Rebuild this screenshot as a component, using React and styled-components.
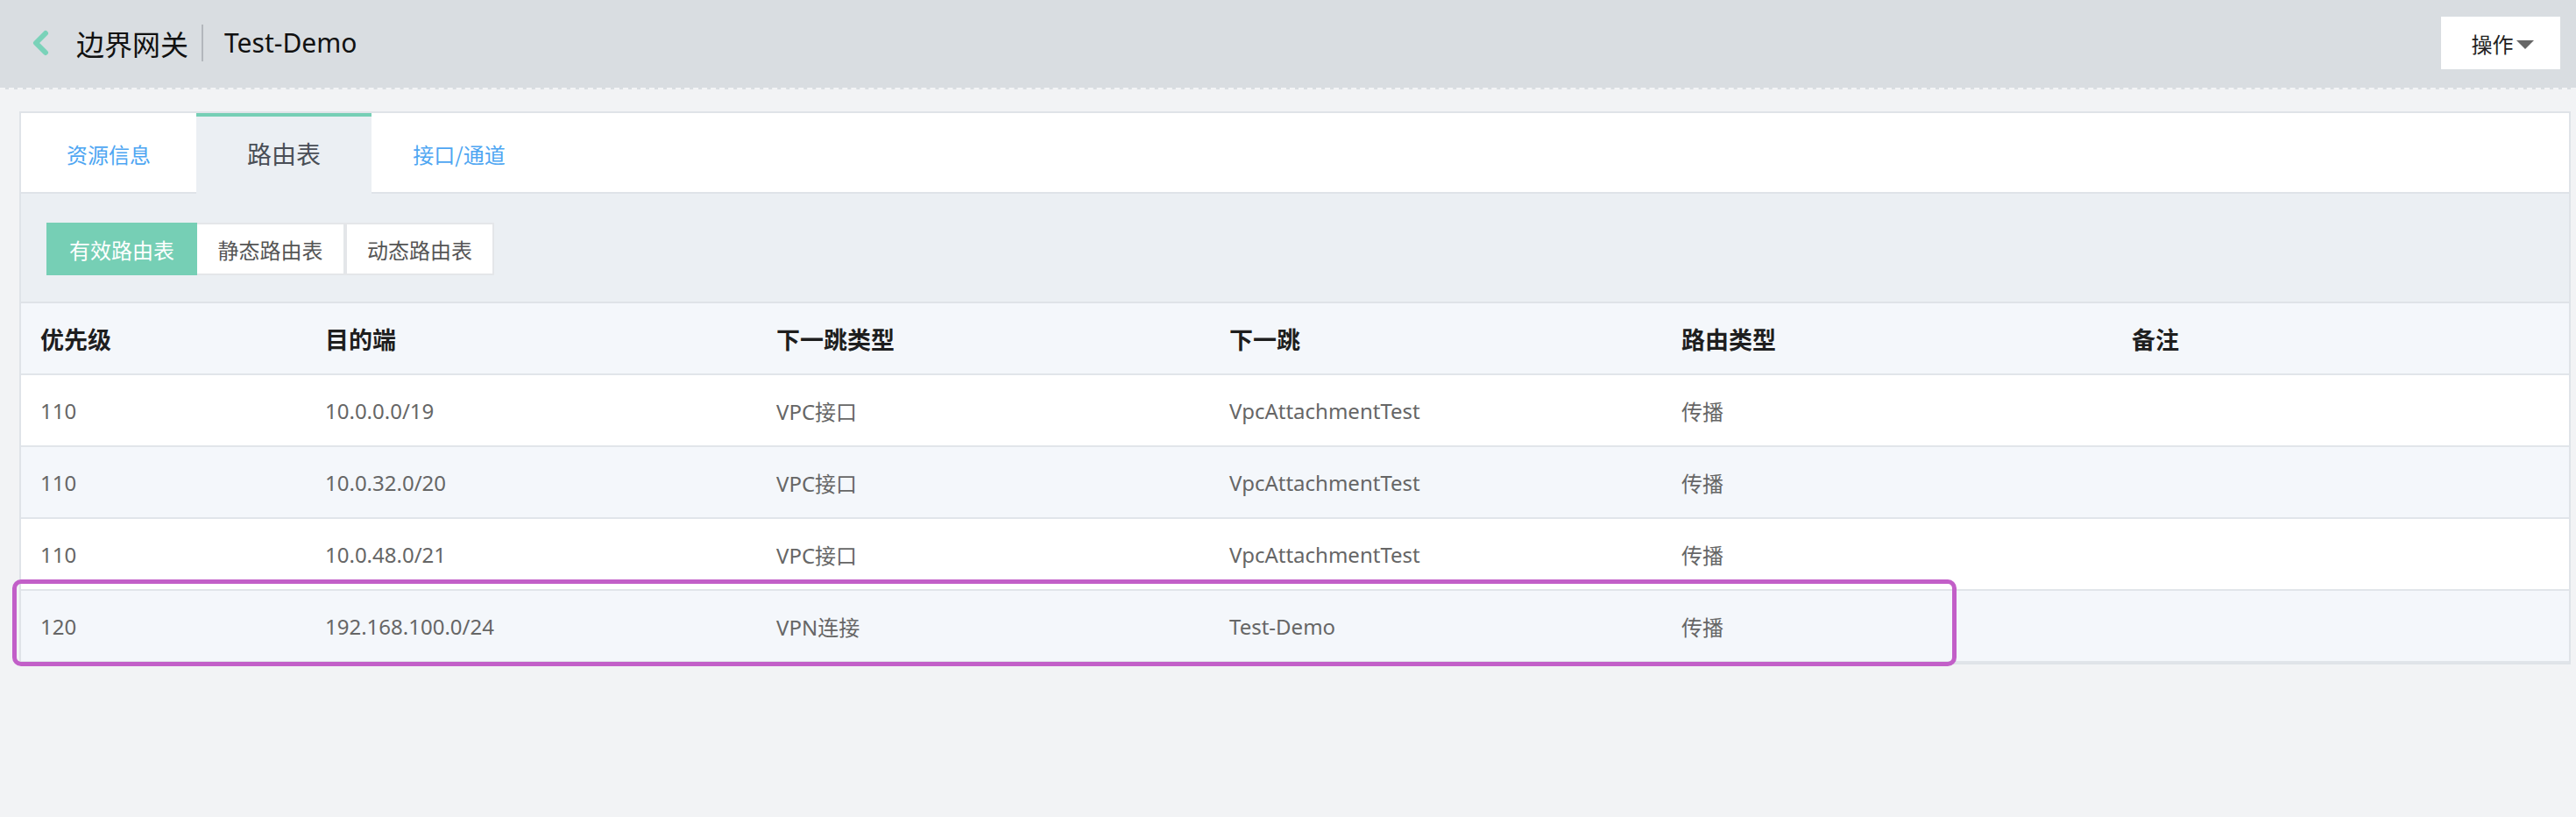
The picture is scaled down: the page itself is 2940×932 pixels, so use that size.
import React from "react";
import styled, { createGlobalStyle } from "styled-components";

const GlobalStyle = createGlobalStyle`
  html, body { margin: 0; padding: 0; }
  body {
    background: #f2f3f5;
    font-family: "Noto Sans", "Noto Sans CJK SC", sans-serif;
    color: #333;
  }
  * { box-sizing: border-box; }
`;

const Page = styled.div`
  width: 2940px;
  min-height: 932px;
  background: #f2f3f5;
`;

const Header = styled.header`
  height: 102px;
  background: #d9dde1;
  border-bottom: 2px dashed #f3f4f6;
  display: flex;
  align-items: center;
  padding: 0 18px 2px 35px;
`;

const BackIcon = styled.svg`
  width: 22px;
  height: 30px;
  flex: none;
`;

const Title = styled.span`
  margin-left: 30px;
  font-size: 32px;
  color: #111;
  font-family: "Noto Sans CJK SC", sans-serif;
  line-height: 1;
`;

const Divider = styled.span`
  width: 2px;
  height: 42px;
  background: #b3b7bc;
  margin: 0 24px 0 15px;
`;

const SubTitle = styled.span`
  font-size: 30px;
  color: #111;
  line-height: 1;
`;

const ActionButton = styled.button`
  margin-left: auto;
  width: 136px;
  height: 60px;
  background: #fff;
  border: none;
  display: flex;
  align-items: center;
  justify-content: center;
  gap: 3px;
  font-family: "Noto Sans CJK SC", sans-serif;
  font-size: 24px;
  color: #222;
  padding: 0 0 0 4px;
`;

const Caret = styled.span`
  width: 0;
  height: 0;
  border-left: 10px solid transparent;
  border-right: 10px solid transparent;
  border-top: 10px solid #666;
  margin-top: 3px;
`;

const Main = styled.main`
  padding: 25px 6px 0 22px;
`;

const Panel = styled.section`
  border: 2px solid #dfe3e8;
  background: #fff;
`;

const TabBar = styled.div`
  display: flex;
  height: 92px;
  background: #fff;
`;

const Tab = styled.div`
  width: 200px;
  display: flex;
  align-items: center;
  justify-content: center;
  font-family: "Noto Sans CJK SC", sans-serif;
  font-size: ${(p) => (p.$active ? "28px" : "24px")};
  color: ${(p) => (p.$active ? "#494e56" : "#4ea6f2")};
  background: ${(p) => (p.$active ? "#ebeff3" : "#fff")};
  border-top: 4px solid ${(p) => (p.$active ? "#76cfb5" : "#fff")};
  border-bottom: 2px solid ${(p) => (p.$active ? "#ebeff3" : "#dfe3e8")};
  padding-bottom: 2px;
`;

const TabFill = styled.div`
  flex: 1;
  border-bottom: 2px solid #dfe3e8;
`;

const SubBar = styled.div`
  background: #ebeff3;
  padding: 33px 0 30px 29px;
  display: flex;
`;

const Seg = styled.div`
  display: flex;
  height: 60px;
`;

const SegButton = styled.div`
  width: ${(p) => p.$w}px;
  height: 60px;
  display: flex;
  align-items: center;
  justify-content: center;
  font-family: "Noto Sans CJK SC", sans-serif;
  font-size: 24px;
  color: ${(p) => (p.$active ? "#fff" : "#555")};
  background: ${(p) => (p.$active ? "#76cfb5" : "#fff")};
  border: ${(p) => (p.$active ? "none" : "2px solid #e4e6e9")};
  border-left: ${(p) => (p.$active || p.$first ? "none" : "2px solid #e4e6e9")};
`;

const Table = styled.div`
  border-top: 2px solid #dfe3e8;
`;

const Row = styled.div`
  position: relative;
  display: grid;
  grid-template-columns: 325px 515px 517px 516px 514px 1fr;
  height: 82px;
  align-items: center;
  background: ${(p) => (p.$alt ? "#f4f7fb" : "#fff")};
  border-bottom: 2px solid #e1e5ea;
`;

const HeadCell = styled.div`
  padding-left: 22px;
  font-family: "Noto Sans CJK SC", sans-serif;
  font-size: 27px;
  font-weight: 700;
  color: #1e1e1e;
`;

const Cell = styled.div`
  padding-left: 22px;
  font-size: 24px;
  color: #666;
  white-space: nowrap;
`;

const Highlight = styled.div`
  position: absolute;
  left: -10px;
  top: -13px;
  width: 2219px;
  height: 99px;
  border: 5px solid #c25fc8;
  border-radius: 10px;
  pointer-events: none;
`;

const columns = ["优先级", "目的端", "下一跳类型", "下一跳", "路由类型", "备注"];

const rows = [
  ["110", "10.0.0.0/19", "VPC接口", "VpcAttachmentTest", "传播", ""],
  ["110", "10.0.32.0/20", "VPC接口", "VpcAttachmentTest", "传播", ""],
  ["110", "10.0.48.0/21", "VPC接口", "VpcAttachmentTest", "传播", ""],
  ["120", "192.168.100.0/24", "VPN连接", "Test-Demo", "传播", ""],
];

export default function App() {
  return (
    <Page>
      <GlobalStyle />
      <Header>
        <BackIcon viewBox="0 0 22 30">
          <path d="M17 4 L6 15 L17 26" fill="none" stroke="#7ad2b9" strokeWidth="6" strokeLinecap="round" strokeLinejoin="round" />
        </BackIcon>
        <Title>边界网关</Title>
        <Divider />
        <SubTitle>Test-Demo</SubTitle>
        <ActionButton>
          操作
          <Caret />
        </ActionButton>
      </Header>
      <Main>
        <Panel>
          <TabBar>
            <Tab>资源信息</Tab>
            <Tab $active>路由表</Tab>
            <Tab>接口/通道</Tab>
            <TabFill />
          </TabBar>
          <SubBar>
            <Seg>
              <SegButton $active $w={172}>有效路由表</SegButton>
              <SegButton $first $w={169}>静态路由表</SegButton>
              <SegButton $w={170}>动态路由表</SegButton>
            </Seg>
          </SubBar>
          <Table>
            <Row $alt>
              {columns.map((c) => (
                <HeadCell key={c}>{c}</HeadCell>
              ))}
            </Row>
            {rows.map((r, i) => (
              <Row key={i} $alt={i % 2 === 1}>
                {r.map((v, j) => (
                  <Cell key={j}>{v}</Cell>
                ))}
                {i === rows.length - 1 && <Highlight />}
              </Row>
            ))}
          </Table>
        </Panel>
      </Main>
    </Page>
  );
}
